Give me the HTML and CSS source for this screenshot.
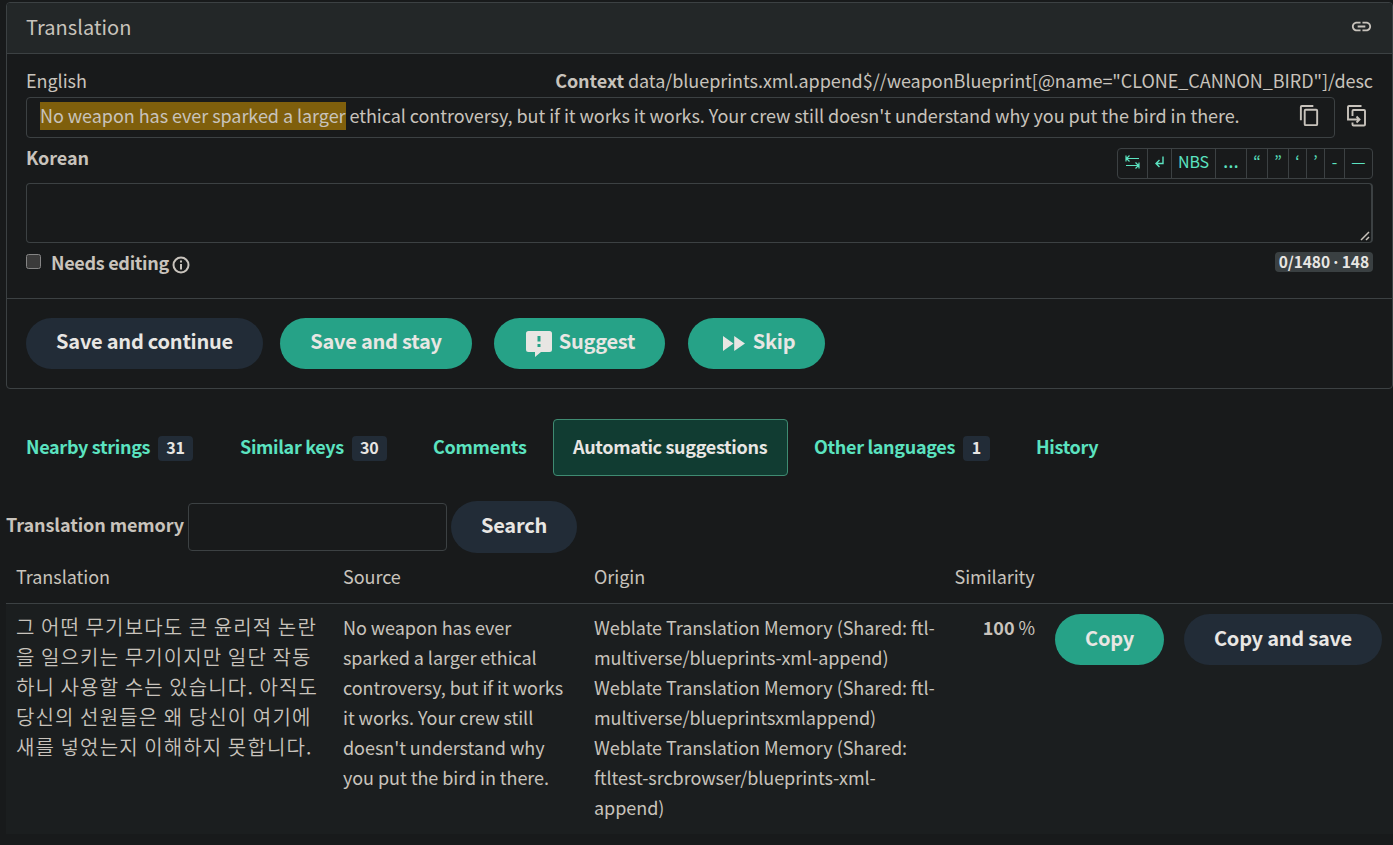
FILE: index.html
```html
<!DOCTYPE html>
<html lang="en">
<head>
<meta charset="utf-8">
<title>Translation</title>
<link rel="stylesheet" href="styles.css">
</head>
<body>
<main class="page">
  <section class="panel">
    <header class="panel-heading">
      <h1 class="panel-title">Translation</h1>
      <svg class="icon-link" viewBox="0 0 24 24"><path d="M3.9 12c0-1.71 1.39-3.1 3.1-3.1h4V7H7c-2.76 0-5 2.24-5 5s2.24 5 5 5h4v-1.9H7c-1.71 0-3.1-1.39-3.1-3.1zM8 13h8v-2H8v2zm9-6h-4v1.9h4c1.71 0 3.1 1.39 3.1 3.1s-1.39 3.1-3.1 3.1h-4V17h4c2.76 0 5-2.24 5-5s-2.24-5-5-5z"/></svg>
    </header>
    <div class="panel-body">
      <div class="row source-head"><span class="t-english">English</span><span class="t-context"><b>Context</b> data/blueprints.xml.append$//weaponBlueprint[@name="CLONE_CANNON_BIRD"]/desc</span></div>
      <div class="row source-row">
        <div class="source-box">
          <span class="source-text"><mark class="hit">No weapon has ever sparked a larger</mark> ethical controversy, but if it works it works. Your crew still doesn't understand why you put the bird in there.</span>
          <svg class="icon-copy" viewBox="0 0 24 24"><path d="M16 1H4a2 2 0 0 0-2 2v14h2V3h12V1zm3 4H8a2 2 0 0 0-2 2v14a2 2 0 0 0 2 2h11a2 2 0 0 0 2-2V7a2 2 0 0 0-2-2zm0 16H8V7h11v14z"/></svg>
        </div>
        <svg class="icon-clone" viewBox="0 0 19 22"><path d="M14.500 1H2a1 1 0 0 0-1 1v12.500h11M5.500 11V6a1 1 0 0 1 1-1H17a1 1 0 0 1 1 1v13.500a1 1 0 0 1-1 1H6.500a1 1 0 0 1-1-1V17.500M9.500 11.500l3 3-3 3"/></svg>
      </div>
      <div class="row target-head">
        <label class="t-korean">Korean</label>
        <div class="toolbar">
          <button class="key k1"><svg class="icon-tab" viewBox="0 0 15 14"><path d="M1 .5v6M14 7.500v6M1 3.500h13M4.500.5l-3 3 3 3M1 10.500h13M10.500 7.500l3 3-3 3"/></svg></button>
          <button class="key k2"><svg class="icon-enter" viewBox="0 0 9 12"><path d="M8 .5v7H1.500M4.500 4 1 7.500 4.500 11"/></svg></button>
          <button class="key k3">NBS</button>
          <button class="key k4">…</button>
          <button class="key k5">“</button>
          <button class="key k6">”</button>
          <button class="key k7">‘</button>
          <button class="key k8">’</button>
          <button class="key k9">-</button>
          <button class="key k10">—</button>
        </div>
      </div>
      <div class="editor"><svg class="grip" viewBox="0 0 10 10"><path d="M1 9 9 1M6 9l3-3"/></svg></div>
      <div class="row flags">
        <label class="check"><span class="box"></span><b class="t-needs">Needs editing</b><svg class="icon-info" viewBox="0 0 18 18"><circle cx="9" cy="9" r="7.500"/><path d="M9 4.500v2M9 8v5.500"/></svg></label>
        <span class="counter">0/1480 · 148</span>
      </div>
    </div>
    <footer class="panel-footer">
      <button class="btn dark b-continue">Save and continue</button>
      <button class="btn b-stay">Save and stay</button>
      <button class="btn b-suggest"><svg class="icon-suggest" viewBox="0 0 26 26"><path fill-rule="evenodd" d="M2.500 0h21A2.500 2.500 0 0 1 26 2.500v16a2.500 2.500 0 0 1-2.500 2.500H15l-6 5V21H2.500A2.500 2.500 0 0 1 0 18.500v-16A2.500 2.500 0 0 1 2.500 0zM11.500 5v5.500h3V5zm0 8v3h3v-3z"/></svg><span>Suggest</span></button>
      <button class="btn b-skip"><svg class="icon-skip" viewBox="0 0 22 15"><path d="M0 0v15l10.500-7.500zM11.200 0v15L22 7.500z"/></svg><span>Skip</span></button>
    </footer>
  </section>

  <nav class="tabs">
    <a class="tab tab1"><span>Nearby strings</span><i class="badge">31</i></a>
    <a class="tab tab2"><span>Similar keys</span><i class="badge">30</i></a>
    <a class="tab tab3"><span>Comments</span></a>
    <a class="tab tab4 active"><span>Automatic suggestions</span></a>
    <a class="tab tab5"><span>Other languages</span><i class="badge">1</i></a>
    <a class="tab tab6"><span>History</span></a>
  </nav>

  <form class="search">
    <label class="search-label">Translation memory</label>
    <input class="search-input" type="text">
    <button class="btn dark b-search" type="button">Search</button>
  </form>

  <div class="grid head">
    <span>Translation</span><span>Source</span><span>Origin</span><span>Similarity</span>
  </div>
  <div class="grid result">
    <p class="ko" lang="ko">그 어떤 무기보다도 큰 윤리적 논란<br>을 일으키는 무기이지만 일단 작동<br>하니 사용할 수는 있습니다. 아직도<br>당신의 선원들은 왜 당신이 여기에<br>새를 넣었는지 이해하지 못합니다.</p>
    <p>No weapon has ever<br>sparked a larger ethical<br>controversy, but if it works<br>it works. Your crew still<br>doesn't understand why<br>you put the bird in there.</p>
    <p>Weblate Translation Memory (Shared: ftl-<br>multiverse/blueprints-xml-append)<br>Weblate Translation Memory (Shared: ftl-<br>multiverse/blueprintsxmlappend)<br>Weblate Translation Memory (Shared:<br>ftltest-srcbrowser/blueprints-xml-<br>append)</p>
    <p class="percent"><b>100</b> %</p>
    <button class="btn b-copy">Copy</button>
    <button class="btn dark b-copysave">Copy and save</button>
  </div>
</main>
</body>
</html>
```

FILE: styles.css
```css
* { box-sizing: border-box; }
body { margin: 0; background: #181a1b; color: #c8c3bc; font: 18px/30px "Noto Sans CJK KR", "Source Sans 3", sans-serif; letter-spacing: -0.05px; }
.page { width: 1393px; height: 845px; padding: 2px 0 0 6px; overflow: hidden; white-space: nowrap; }
h1, p { margin: 0; font-weight: 400; }
button { font: inherit; letter-spacing: inherit; margin: 0; padding: 0; }
svg { display: block; flex: none; fill: currentColor; }
.panel { height: 387px; border: 1px solid #3c4143; border-radius: 4px; }
.panel-heading { height: 51px; padding: 0 19px 2px 19px; display: flex; align-items: center; justify-content: space-between; background: #232728; border-bottom: 1px solid #3c4143; border-radius: 3px 3px 0 0; }
.panel-title { font-size: 20px; line-height: 48px; letter-spacing: 0.05px; }
.icon-link { width: 23px; height: 23px; margin: -1px 0 0; }
.panel-body { height: 244px; padding: 11px 19px 0; }
.row { display: flex; justify-content: space-between; }
.source-head { height: 32px; }
.source-row { height: 41px; }
.source-box { width: 1309px; height: 41px; border: 1px solid #3c4143; border-radius: 4px; padding: 0 13px; display: flex; align-items: center; justify-content: space-between; }
.source-text { line-height: 28px; margin-top: -5px; }
.hit { display: inline-block; background: linear-gradient(transparent 1px, #7f5f0c 1px); color: inherit; padding-bottom: 1px; margin-bottom: -1px; }
.icon-copy { width: 23px; height: 23px; margin-top: -4px; }
.icon-clone { width: 19px; height: 22px; margin: 8px 7px 0 0; fill: none; stroke: currentColor; stroke-width: 1.9; }
.target-head { height: 45px; }
.t-korean { font-weight: 700; margin-top: 4px; }
.toolbar { display: flex; height: 31px; margin-top: 10px; border: 1px solid #3c4143; border-radius: 4px; }
.key { display: flex; align-items: center; justify-content: center; height: 29px; padding-bottom: 5px; background: none; border: 0; border-right: 1px solid #3c4143; color: #5be3c0; font-size: 16px; }
.key:last-child { border-right: 0; }
.k1, .k2 { padding-bottom: 3px; }
.k1 { width: 30px; } .k2 { width: 24px; } .k3 { width: 44px; } .k4 { width: 31px; font-family: "Noto Sans", sans-serif; font-size: 20px; } .k5 { width: 21px; }
.k6 { width: 21px; } .k7 { width: 18px; } .k8 { width: 18px; } .k9 { width: 20px; } .k10 { width: 27px; }
.icon-tab { width: 15px; height: 14px; fill: none; stroke: currentColor; stroke-width: 1.2; }
.icon-enter { width: 9px; height: 12px; fill: none; stroke: currentColor; stroke-width: 1.4; }
.editor { height: 60px; border: 1px solid #3c4143; border-right-width: 2px; border-radius: 4px; display: flex; justify-content: flex-end; align-items: flex-end; padding: 1px; }
.grip { width: 10px; height: 10px; fill: none; stroke: #c8c3bc; stroke-width: 1.5; }
.flags { padding-top: 4px; }
.t-needs { letter-spacing: -0.3px; }
.check { display: flex; height: 30px; }
.box { width: 15px; height: 15px; margin: 7px 10px 0 0; background: #3b3b3b; border: 1px solid #858585; border-radius: 2.500px; }
.icon-info { width: 18px; height: 18px; margin: 9px 0 0 3px; fill: none; stroke: currentColor; stroke-width: 2; }
.counter { height: 20px; margin-top: 5px; padding: 0 4px; border-radius: 4px; background: #3a4042; color: #e8e6e3; font-size: 15.500px; font-weight: 700; line-height: 18px; word-spacing: -2.200px; }
.panel-footer { height: 90px; padding: 19px; border-top: 1px solid #3c4143; display: flex; }
.btn { display: flex; align-items: center; justify-content: center; height: 51px; padding-bottom: 4px; border: 0; border-radius: 26px; background: #26a287; color: #e8e6e3; font-size: 20px; font-weight: 700; letter-spacing: -0.240px; }
.panel-footer .btn { padding-bottom: 6px; }
.dark { background: #222c37; }
.b-continue { width: 237px; } .b-stay { width: 192px; margin-left: 17px; }
.b-suggest { width: 171px; margin-left: 22px; padding-left: 2px; gap: 7px; } .b-skip { width: 137px; margin-left: 23px; padding-left: 5px; gap: 8px; }
.icon-suggest { width: 26px; height: 26px; margin-top: 6px; }
.icon-skip { width: 22px; height: 15px; margin-top: 6px; }
.tabs { display: flex; height: 57px; margin-top: 30px; font-weight: 700; letter-spacing: -0.320px; }
.tab { display: flex; align-items: center; height: 57px; padding: 0 0 3px 19px; border: 1px solid transparent; border-radius: 4px; color: #5be3c0; }
.active { background: #113c32; border-color: #3f8b72; color: #e8e6e3; }
.tab1 { width: 214px; } .tab2 { width: 193px; } .tab3 { width: 134px; } .tab4 { width: 235px; margin: 0 6px; } .tab5 { width: 222px; }
.badge { margin: 5px 0 0 8px; min-width: 27px; height: 25px; padding: 0 8px; border-radius: 4px; background: #222c37; color: #e8e6e3; font-size: 16px; font-style: normal; line-height: 23px; letter-spacing: 0; text-align: center; }
.search { display: flex; height: 52px; margin-top: 25px; }
.search-label { font-weight: 700; width: 182px; padding-top: 8px; letter-spacing: -0.08px; }
.search-input { width: 259px; height: 48px; margin: 2px 4px 0 0; border: 1px solid #3c4143; border-radius: 4px; background: #181a1b; }
.b-search { width: 126px; height: 52px; }
.grid { display: grid; grid-template-columns: 327px 251px 351px 110px 129px 219px; padding-left: 10px; }
.head { height: 51px; padding-top: 8px; border-bottom: 1px solid #3c4143; }
.head span:nth-child(4) { padding-left: 9.500px; }
.result { height: 230px; padding-top: 10px; background: #1b1e1f; }
.result p { margin-top: -2px; }
.result .ko { font-size: 20px; font-weight: 350; letter-spacing: 1.150px; word-spacing: -1.300px; }
.percent { padding-right: 20px; text-align: right; }
.b-copy { width: 109px; } .b-copysave { width: 198px; }
```
